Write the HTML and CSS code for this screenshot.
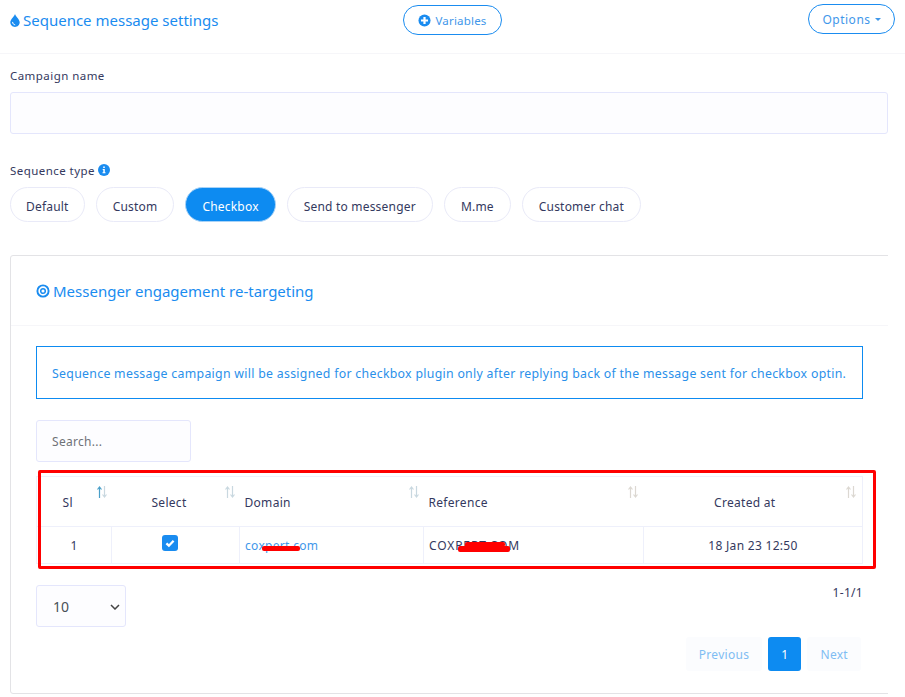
FILE: index.html
```html
<!DOCTYPE html>
<html lang="en">
<head>
<meta charset="utf-8">
<title>Sequence message settings</title>
<link rel="stylesheet" href="styles.css">
</head>
<body>
<svg class="defs" width="0" height="0" aria-hidden="true">
  <symbol id="arrow-up" viewBox="0 0 5 12"><path fill="none" stroke="currentColor" stroke-width="1.200" d="M2.500 12V1M.5 3.500l2-2.500 2 2.500"/></symbol>
  <symbol id="arrow-down" viewBox="0 0 5 12"><path fill="none" stroke="currentColor" stroke-width="1.200" d="M2.500 0v11M.5 8.500l2 2.500 2-2.500"/></symbol>
</svg>
<header class="top">
  <h1 class="title">
    <svg class="drop" viewBox="0 0 10 13"><path fill="#1a8cf0" d="M5 0C4.300 2.500 0.300 5.400 0.300 8.300 0.300 10.900 2.400 13 5 13s4.700-2.100 4.700-4.700C9.700 5.400 5.700 2.500 5 0z"/><path fill="none" stroke="#fff" stroke-width="1" stroke-linecap="round" d="M2.600 8.300c0 1.400 1 2.400 2.200 2.500"/></svg>
    Sequence message settings
  </h1>
  <button class="btn-outline btn-variables">
    <svg class="plus" viewBox="0 0 14 14"><circle cx="7" cy="7" r="6.500" fill="#1a8cf0"/><path stroke="#fff" stroke-width="2.400" d="M7 3.200v7.600M3.200 7h7.600"/></svg>
    Variables
  </button>
  <button class="btn-outline btn-options">Options<span class="caret"></span></button>
</header>

<main class="content">
  <label class="label label-campaign">Campaign name</label>
  <div class="input-wide"></div>

  <div class="label label-type">Sequence type
    <svg class="info" viewBox="0 0 12 12"><circle cx="6" cy="6" r="6" fill="#1a8cf0"/><path fill="#fff" d="M5.200 2.400h1.600v1.500H5.200zM4.700 5h2.100v3.300h.7v1h-3v-1h.8V6h-.6z"/></svg>
  </div>
  <div class="pills">
    <span class="pill pill-first">Default</span>
    <span class="pill">Custom</span>
    <span class="pill pill-active">Checkbox</span>
    <span class="pill">Send to messenger</span>
    <span class="pill">M.me</span>
    <span class="pill">Customer chat</span>
  </div>

  <section class="card">
    <div class="card-head">
      <svg class="target" viewBox="0 0 14 14"><circle cx="7" cy="7" r="5.600" fill="none" stroke="#1a8cf0" stroke-width="1.900"/><circle cx="7" cy="7" r="2.300" fill="none" stroke="#1a8cf0" stroke-width="1.500"/></svg>
      <h2 class="card-title">Messenger engagement re-targeting</h2>
    </div>
    <div class="card-body">
      <div class="alert">Sequence message campaign will be assigned for checkbox plugin only after replying back of the message sent for checkbox optin.</div>
      <div class="search">Search...</div>

      <div class="table-wrap">
        <table class="table">
          <colgroup><col class="c1"><col class="c2"><col class="c3"><col class="c4"><col class="c5"></colgroup>
          <thead>
            <tr>
              <th class="center">Sl<span class="sort"><svg class="on"><use href="#arrow-up"/></svg><svg><use href="#arrow-down"/></svg></span></th>
              <th class="center">Select<span class="sort"><svg><use href="#arrow-up"/></svg><svg><use href="#arrow-down"/></svg></span></th>
              <th>Domain<span class="sort"><svg><use href="#arrow-up"/></svg><svg><use href="#arrow-down"/></svg></span></th>
              <th>Reference<span class="sort warm"><svg><use href="#arrow-up"/></svg><svg><use href="#arrow-down"/></svg></span></th>
              <th class="center th-last">Created at<span class="sort warm"><svg><use href="#arrow-up"/></svg><svg><use href="#arrow-down"/></svg></span></th>
            </tr>
          </thead>
          <tbody>
            <tr>
              <td class="center">1</td>
              <td class="center td-check"><span class="check"><svg viewBox="0 0 16 16"><path fill="none" stroke="#fff" stroke-width="2.300" d="M4.400 8.300l2.500 2.400 4.700-4.900"/></svg></span></td>
              <td class="link"><span class="redact-host">coxpert.com<span class="scribble scribble-a"></span></span></td>
              <td><span class="redact-host redact-wide">COXPERT.COM<span class="scribble scribble-b"></span><span class="scribble scribble-c"></span></span></td>
              <td class="center">18 Jan 23 12:50</td>
            </tr>
          </tbody>
        </table>
        <div class="redbox"></div>
      </div>

      <div class="foot">
        <div class="select">10
          <svg class="chev" viewBox="0 0 10 6"><path fill="none" stroke="#444" stroke-width="1.500" d="M1 1l4 4 4-4"/></svg>
        </div>
        <div class="foot-right">
          <div class="count">1-1/1</div>
          <nav class="pager">
            <span class="page page-off">Previous</span>
            <span class="page page-on">1</span>
            <span class="page page-off">Next</span>
          </nav>
        </div>
      </div>
    </div>
  </section>
</main>
</body>
</html>
```
FILE: styles.css
```css
* { box-sizing: border-box; }
html, body { margin: 0; padding: 0; }
body {
  width: 905px;
  height: 697px;
  overflow: hidden;
  background: #fff;
  font-family: "Noto Sans", "Open Sans", sans-serif;
  font-size: 12px;
  color: #34395e;
  letter-spacing: 0.300px;
}
.defs { display: block; height: 0; }
.top {
  display: flex;
  align-items: flex-start;
  height: 54px;
  padding: 4px 10px 0;
  border-bottom: 1px solid #f6f6f9;
}
.title {
  display: flex;
  align-items: center;
  gap: 3px;
  margin: 6px 0 0;
  width: 393px;
  font-size: 15px;
  line-height: 20px;
  font-weight: 400;
  letter-spacing: 0;
  color: #1a8cf0;
}
.drop { width: 10px; height: 13px; }
.btn-outline {
  display: inline-flex;
  align-items: center;
  justify-content: center;
  height: 30px;
  border: 1px solid #1a8cf0;
  border-radius: 15px;
  background: #fff;
  color: #3f97ea;
  font: inherit;
  font-size: 12px;
  letter-spacing: 0.500px;
}
.btn-variables { width: 99px; margin-top: 1px; gap: 4px; font-size: 11.500px; letter-spacing: 0.200px; }
.plus { width: 13px; height: 13px; }
.btn-options { width: 87px; margin-left: auto; }
.caret {
  margin-left: 4px;
  border-left: 3px solid transparent;
  border-right: 3px solid transparent;
  border-top: 3px solid #3f97ea;
}
.content { width: 888px; padding-left: 10px; overflow: hidden; height: 643px; }
.label { display: block; line-height: 16px; font-size: 11.500px; letter-spacing: 0.450px; }
.label-campaign { margin-top: 14px; }
.input-wide {
  height: 42px;
  margin-top: 8px;
  background: #fdfdff;
  border: 1px solid #e4e6fc;
  border-radius: 3px;
}
.label-type { margin-top: 29px; display: flex; align-items: center; gap: 3px; }
.info { width: 12px; height: 12px; margin-top: -2px; }
.pills { display: flex; gap: 11px; margin-top: 8px; letter-spacing: 0.200px; }
.pill {
  display: flex;
  align-items: center;
  justify-content: center;
  height: 35px;
  padding: 3px 16px 0;
  border: 1px solid #e9eaf8;
  border-radius: 18px;
  background: #fff;
  color: #34395e;
}
.pill-first { padding: 3px 15px 0; }
.pill-active {
  background: #0d8bf1;
  border-color: #a9d3f7;
  color: #fff;
}
.card {
  width: 886px;
  height: 439px;
  margin-top: 33px;
  border: 1px solid #e3e3e6;
  border-radius: 3px;
}
.card-head {
  display: flex;
  align-items: center;
  gap: 3px;
  height: 70px;
  padding-left: 25px;
  border-bottom: 1px solid #f6f6f9;
}
.target { width: 14px; height: 14px; }
.card-title {
  margin: 0;
  font-size: 15px;
  font-weight: 400;
  letter-spacing: 0;
  color: #1a8cf0;
}
.card-body { padding: 20px 25px 0; width: 877px; }
.alert {
  display: flex;
  align-items: center;
  height: 53px;
  padding: 2px 15px 0;
  border: 1px solid #0d8bf1;
  color: #2a90ea;
  font-size: 12.300px;
  letter-spacing: 0.300px;
  white-space: nowrap;
}
.search {
  display: flex;
  align-items: center;
  width: 155px;
  height: 42px;
  margin-top: 21px;
  padding-left: 15px;
  background: #fdfdff;
  border: 1px solid #e4e6fc;
  border-radius: 3px;
  color: #6f7277;
}
.table-wrap { position: relative; margin-top: 14px; }
.table {
  width: 826px;
  border-collapse: collapse;
  table-layout: fixed;
  border: 1px solid #eef0fb;
}
.c1 { width: 75px; }
.c2 { width: 128px; }
.c3 { width: 184px; }
.c4 { width: 220px; }
.c5 { width: 219px; }
.table th {
  position: relative;
  height: 50px;
  padding: 2px 18px 0 5px;
  border-bottom: 1px solid #eef0fb;
  font-weight: 400;
  text-align: left;
}
.table th.center, .table td.center { text-align: center; }
.table th.th-last { padding-right: 21px; }
.table td {
  height: 37px;
  padding: 0 5px;
  border: 1px solid #eef0fb;
  border-top: 0;
}
.table td.td-check { padding-right: 17px; }
.sort {
  position: absolute;
  top: 9px;
  right: 5px;
  display: flex;
  color: #c9d8e0;
}
.sort svg { display: block; width: 5px; height: 12px; }
.sort .on { color: #4a9fc8; }
.sort.warm { color: #dcd8d2; right: 6px; }
.check {
  display: inline-flex;
  width: 16px;
  height: 16px;
  border-radius: 3px;
  background: #1a8cf0;
  vertical-align: 1px;
}
.link { color: #3f97ea; }
.redact-host { position: relative; display: inline-block; }
.redact-wide { letter-spacing: 0.900px; }
.scribble { position: absolute; background: #f00; border-radius: 2px; }
.scribble-a { left: 17px; top: 9px; width: 38px; height: 5px; }
.scribble-b { left: 29px; top: 9px; width: 52px; height: 6px; }
.scribble-c { left: 36px; top: 5px; width: 40px; height: 5px; }
.redbox {
  position: absolute;
  left: 2px;
  top: -6px;
  width: 838px;
  height: 99px;
  border: 3px solid #f00;
  border-radius: 2px;
}
.foot { display: flex; justify-content: space-between; margin-top: 21px; }
.select {
  display: flex;
  align-items: center;
  position: relative;
  width: 90px;
  height: 42px;
  padding-left: 16px;
  background: #fdfdff;
  border: 1px solid #e4e6fc;
  border-radius: 3px;
  font-size: 14px;
  letter-spacing: 0;
  color: #495057;
}
.chev { position: absolute; right: 5px; top: 18px; width: 10px; height: 6px; }
.foot-right { display: flex; flex-direction: column; align-items: flex-end; }
.count { line-height: 16px; }
.pager { display: flex; gap: 6px; margin-top: 36px; margin-right: 2px; }
.page {
  display: flex;
  align-items: center;
  justify-content: center;
  height: 34px;
  padding: 0 13px;
  border-radius: 3px;
}
.page-off { background: #fbfcfe; color: #7fbdf3; }
.page-on { background: #0d8bf1; color: #fff; }
```
